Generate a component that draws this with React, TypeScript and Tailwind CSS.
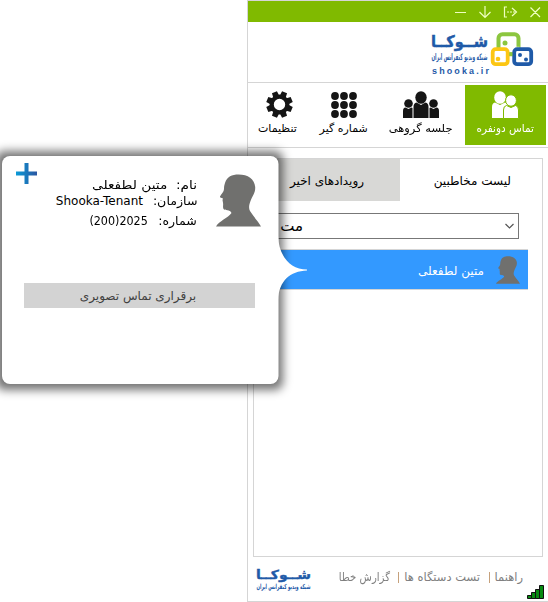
import type { ReactNode } from "react";

function Head({ className }: { className: string }) {
  return (
    <svg className={className} viewBox="0 0 45 53" preserveAspectRatio="none" fill="#70706e">
      <path d="M9 9C11 2.500 16 .5 22.500 .5C32 .5 38.500 5 39.200 13C39.500 19 36.500 22 34.500 27C33 31 32.500 34 34 37C37 42 42 47 45 52.500H0C3 47 12 44 15.500 39C14 35 9 37 7.500 35C6.500 33 7.500 31 7 29C7 27 6 27 7 24.500C5 24 3.500 23.500 4 22.500C5.500 19.500 8 18 8 15C8 12 8.500 10.500 9 9Z" />
    </svg>
  );
}

function Gear() {
  return (
    <svg className="h-[27px] w-[27px]" viewBox="-13.5 -13.5 27 27">
      {[22.5, 67.5, 112.5, 157.5, 202.5, 247.5, 292.5, 337.5].map((a) => (
        <path key={a} d="M-3.200 -8L-2.700 -13.200H2.700L3.200 -8Z" transform={`rotate(${a})`} fill="#151515" />
      ))}
      <circle r="7.800" fill="none" stroke="#151515" strokeWidth="4.200" />
    </svg>
  );
}

function Dots() {
  return (
    <svg className="h-[26px] w-[26px]" viewBox="0 0 26 26" fill="#151515">
      {[4, 13, 22].map((y) => [4, 13, 22].map((x) => <circle key={`${x}-${y}`} cx={x} cy={y} r="3.900" />))}
    </svg>
  );
}

function Group() {
  return (
    <svg className="h-[28px] w-[36px]" viewBox="0 0 36 28" fill="#151515">
      <circle cx="5.500" cy="12.500" r="4.300" />
      <circle cx="30.500" cy="12.500" r="4.300" />
      <path d="M0 27V20Q0 16.500 2.500 16.500L5.500 18L8.500 16.500L9.500 17V27ZM36 27V20Q36 16.500 33.500 16.500L30.500 18L27.500 16.500L26.500 17V27Z" />
      <ellipse cx="18" cy="6.500" rx="5.700" ry="6.300" />
      <path d="M10.500 27V16Q10.500 12 13.500 11.500L18 14L22.500 11.500Q25.500 12 25.500 16V27Z" />
    </svg>
  );
}

function Pair() {
  return (
    <svg className="h-[28px] w-[27px]" viewBox="0 0 27 28" fill="#fff">
      <ellipse cx="8" cy="6.500" rx="5.800" ry="6.300" />
      <path d="M0 27V16Q0 12 3 11.500L8 14L13 11.500Q16 12 16 16V27Z" />
      <ellipse cx="19" cy="9.500" rx="5.400" ry="5.700" stroke="#80ba00" />
      <path d="M11.500 27.500V19Q11.500 15 14.500 14.500L19 16.500L23.500 14.500Q26.500 15 26.500 19V27.500Z" stroke="#80ba00" />
    </svg>
  );
}

function Wordmark({ className, latin }: { className: string; latin?: boolean }) {
  return (
    <svg className={`overflow-visible ${className}`} viewBox={latin ? "0 0 57 45" : "0 0 57 33"} preserveAspectRatio="none" fill="#1f5aa8" direction="rtl">
      <text x="57" y="15.500" textLength="57" lengthAdjust="spacingAndGlyphs" fontFamily="'DejaVu Sans', sans-serif" fontWeight="bold" fontSize="16" stroke="#1f5aa8" strokeWidth=".5">شــوکــا</text>
      <text x="56.500" y="28.500" textLength="56" lengthAdjust="spacingAndGlyphs" fontFamily="'DejaVu Sans', sans-serif" fontWeight="bold" fontSize="9">شبکه ویدیو کنفرانس ایران</text>
      {latin && (
        <text x="1" y="43" direction="ltr" textLength="57" fontFamily="'Liberation Sans', sans-serif" fontWeight="bold" fontSize="9">shooka.ir</text>
      )}
    </svg>
  );
}

function Squares() {
  return (
    <svg className="h-[38px] w-[44px]" viewBox="0 0 44 38" fill="none">
      <rect x="8.500" y="3.200" width="20" height="20" rx="4" stroke="#8cc63f" strokeWidth="4" />
      <rect x="2.700" y="18.200" width="15" height="15" rx="3" fill="#fff" stroke="#fcc613" strokeWidth="3.800" />
      <path d="M19.600 16.300H29.500" stroke="#fff" />
      <rect x="24.200" y="18.200" width="17" height="15" rx="3" fill="#fff" stroke="#1f5aa8" strokeWidth="3.800" />
      <path d="M19.500 23.200H22.300" stroke="#8cc63f" strokeWidth="3.600" />
      <circle cx="15" cy="12" r="2.500" fill="#8cc63f" />
      <circle cx="8" cy="28" r="2.300" fill="#fcc613" />
      <circle cx="30" cy="24" r="2" fill="#1f5aa8" />
      <circle cx="36" cy="28.500" r="2" fill="#1f5aa8" />
    </svg>
  );
}

function NavItem({ icon, label, className, labelClass }: { icon: ReactNode; label: string; className: string; labelClass: string }) {
  return (
    <div className={`flex h-[60px] flex-col items-center pt-[5px] whitespace-nowrap ${className}`}>
      <div className="flex h-[29px] items-center">{icon}</div>
      <span className={`mt-[2px] leading-[16px] ${labelClass}`}>{label}</span>
    </div>
  );
}

export default function App() {
  return (
    <div className="h-[602px] w-[548px] overflow-hidden bg-white font-['DejaVu_Sans',sans-serif] text-[12px] text-black">
      <main dir="rtl" className="ml-[247px] flex h-[602px] w-[301px] flex-col border-t border-b border-l border-[#d5d5d5]">
        <header className="flex h-[21px] shrink-0 justify-start bg-[#80ba00]">
          <svg className="h-[21px] w-[100px]" viewBox="448 1 100 21" fill="none" stroke="#efffc0" strokeWidth="1.200">
            <path d="M455 12.500H466M485 6V17M479.500 12L485 17.500L490.500 12M530.500 7.500L540 17M540 7.500L530.500 17" />
            <path d="M507 7H504.500V17H507M512 8L516.500 12L512 16" />
            <path d="M507 12H516" strokeDasharray="2 1" />
          </svg>
        </header>
        <div className="flex h-[61px] shrink-0 items-start border-b border-[#d5d5d5] pt-[9px] pr-[14px]">
          <Squares />
          <Wordmark className="mr-[2px] h-[45px] w-[57px]" latin />
        </div>
        <nav className="flex h-[65px] shrink-0 border-b border-[#d5d5d5] pt-[2px] pr-[2px]">
          <NavItem icon={<Pair />} label="تماس دونفره" className="w-[81px] bg-[#80ba00] text-white" labelClass="text-[11px] scale-x-95" />
          <NavItem icon={<Group />} label="جلسه گروهی" className="w-[89px]" labelClass="text-[11px] scale-x-[1.04]" />
          <NavItem icon={<Dots />} label="شماره گیر" className="w-[66px]" labelClass="text-[11px]" />
          <NavItem icon={<Gear />} label="تنظیمات" className="w-[63px]" labelClass="text-[11px] relative right-[2px]" />
        </nav>
        <section className="mt-[10px] mr-[5px] h-[399px] w-[290px] shrink-0 border border-[#d5d5d5]">
          <div className="flex h-[42px] text-[12px]">
            <div className="w-[142px] pt-[13px] pr-[31px]">لیست مخاطبین</div>
            <div className="w-[146px] bg-[#d8d8d6] pt-[13px] pr-[36px]">رویدادهای اخیر</div>
          </div>
          <div className="mt-[12px] mr-[23px] flex h-[26px] w-[253px] items-center border border-[#777] pr-[4px]">
            <svg className="h-[6px] w-[9px]" viewBox="0 0 9 6" fill="none" stroke="#555" strokeWidth="1.200"><path d="M.5 1L4.500 5L8.500 1" /></svg>
            <span className="mr-[202px] text-[15px]">مت</span>
          </div>
          <div className="mt-[10px] mr-[14px] flex h-[41px] w-[273px] items-center border-y border-[#d5d5d5] bg-[#3399ff] pr-[8px] text-[12px] text-white">
            <Head className="h-[28px] w-[24px]" />
            <span className="mt-[3px] mr-[12px] whitespace-nowrap">متین لطفعلی</span>
          </div>
        </section>
        <footer className="flex h-[44px] shrink-0 text-[11.5px] whitespace-nowrap text-[#808080]">
          <svg className="mt-[28px] mr-[3px] h-[14px] w-[18px]" viewBox="0 0 18 14" fill="#078b12" stroke="#111">
            <path d="M.5 10.500H4.500V13.500H.500ZM4.500 7.500H8.500V13.500H4.500ZM8.500 4.500H12.500V13.500H8.500ZM12.500 .5H16.500V13.500H12.500Z" />
          </svg>
          <span className="mt-[12px] mr-[4px] h-[18px] w-[29px]">راهنما</span>
          <i className="mt-[15px] mr-[4px] h-[11px] w-px bg-[#c6a17c]" />
          <span className="mt-[12px] mr-[9px] w-[76px]">تست دستگاه ها</span>
          <i className="mt-[15px] mr-[5px] h-[11px] w-px bg-[#c6a17c]" />
          <span className="mt-[12px] mr-[8px] w-[52px] origin-right scale-x-[0.88]">گزارش خطا</span>
          <Wordmark className="mt-[10px] mr-[27px] h-[26px] w-[55px]" />
        </footer>
      </main>
      <aside className="absolute top-[140px] left-0 h-[262px] w-[312px]">
        <svg className="block h-[262px] w-[312px]" viewBox="0 140 312 262">
          <defs>
            <filter id="shadow" x="-40" y="120" width="360" height="300" filterUnits="userSpaceOnUse"><feGaussianBlur stdDeviation="5" /></filter>
            <linearGradient id="plus"><stop stopColor="#0a9bd8" /><stop offset="1" stopColor="#2b55a0" /></linearGradient>
          </defs>
          <rect x="-4" y="151" width="287" height="239" rx="8" fill="#000" fillOpacity=".55" filter="url(#shadow)" />
          <path d="M278 236C279 256 290 269.500 307 269.500V270.500C290 271 279 281 278 300" fill="white" />
          <rect x="2" y="156" width="276.500" height="228" rx="8" fill="white" />
          <path d="M24.500 163H28.500V171.500H37V175.500H28.500V184H24.500V175.500H16V171.500H24.500Z" fill="url(#plus)" />
        </svg>
        <Head className="absolute top-[34px] left-[216px] h-[53px] w-[45px]" />
        <div dir="rtl" className="absolute top-[37px] left-[24px] w-[173px] text-[12px] leading-[16px] whitespace-pre">
          <div className="origin-right scale-x-[1.14]">نام:  متین لطفعلی</div>
          <div className="flex"><span className="w-[54px]"><span className="inline-block origin-right scale-x-105">سازمان:</span></span><span dir="ltr">Shooka-Tenant</span></div>
          <div className="mt-[4px] flex"><span className="w-[49px]"><span className="inline-block origin-right scale-x-105">شماره:</span></span><bdi dir="ltr" className="inline-block origin-right scale-x-[0.93]">(200)2025</bdi></div>
        </div>
        <button className="absolute top-[143px] left-[24px] h-[25px] w-[231px] pr-[3px] bg-[#d3d3d3] text-[12px] text-[#404040]" dir="rtl">برقراری تماس تصویری</button>
      </aside>
    </div>
  );
}
